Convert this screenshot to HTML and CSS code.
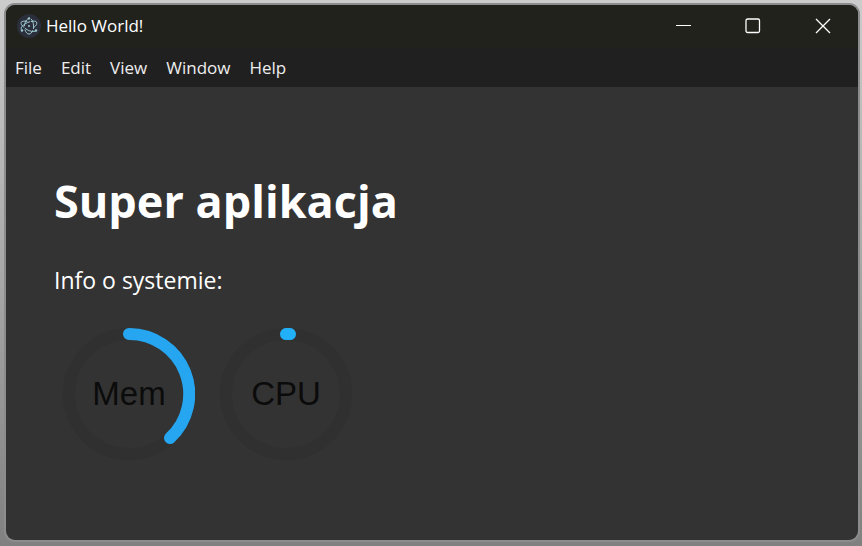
FILE: index.html
```html
<!DOCTYPE html>
<html lang="pl">
<head>
<meta charset="utf-8">
<title>Hello World!</title>
<link rel="stylesheet" href="styles.css">
</head>
<body>
<div class="window">
  <header class="titlebar">
    <svg class="logo" viewBox="0 0 24 24" aria-hidden="true">
      <circle cx="12" cy="12" r="12" fill="#2b2e3b"/>
      <g fill="none" stroke="#9fcbd3" stroke-width="1" stroke-linecap="round">
        <path d="M10 7.300C7 6.700 4.800 7.200 4.200 8.300c-.7 1.200.5 3.300 2.800 5.100"/>
        <path d="M8.300 14.600c1.200.9 2.600 1.600 4.200 2.200 3.200 1.100 5.800 1 6.500-.2"/>
        <path d="M17 13.400c2.400-1.900 3.300-4 2.600-5.300-.6-1-2.700-1.300-5.400-.7"/>
        <path d="M12.700 7.800c-1.500.4-3 1-4.600 2-2.700 1.700-4.300 3.600-4.100 5.200"/>
        <path d="M8 16c.9 2.600 2.400 4.100 4 4.100s2.900-1.500 3.800-3.600"/>
        <path d="M16.500 14.500c.5-3.500-.3-7.300-2.100-9.300"/>
        <path d="M12 4.500C9.400 5 7.800 8.200 7.500 11.800"/>
      </g>
      <g fill="#9fcbd3">
        <circle cx="12" cy="4.400" r="1.200"/>
        <circle cx="5" cy="16.500" r="1.200"/>
        <circle cx="19" cy="16.500" r="1.200"/>
        <circle cx="12" cy="12" r="1"/>
      </g>
    </svg>
    <span class="title">Hello World!</span>
    <div class="controls">
      <button class="control" type="button" aria-label="Minimize">
        <svg viewBox="0 0 16 16"><path class="line" d="M1 7.500h15"/></svg>
      </button>
      <button class="control" type="button" aria-label="Maximize">
        <svg viewBox="0 0 16 16"><rect x="1" y="1" width="13.500" height="13.500" rx="1.500"/></svg>
      </button>
      <button class="control" type="button" aria-label="Close">
        <svg viewBox="0 0 16 16"><path d="M1 1l14 14M15 1L1 15"/></svg>
      </button>
    </div>
  </header>
  <nav class="menubar">
    <button type="button">File</button>
    <button type="button">Edit</button>
    <button type="button">View</button>
    <button type="button">Window</button>
    <button type="button">Help</button>
  </nav>
  <main class="content">
    <h1>Super aplikacja</h1>
    <p>Info o systemie:</p>
    <div class="gauges">
      <svg class="gauge" viewBox="0 0 132 132" role="img" aria-label="Mem">
        <circle class="track" cx="66" cy="66" r="60"/>
        <path class="value mem" d="M66 6A60 60 0 0 1 107 110"/>
        <text x="66" y="77">Mem</text>
      </svg>
      <svg class="gauge" viewBox="0 0 132 132" role="img" aria-label="CPU">
        <circle class="track" cx="66" cy="66" r="60"/>
        <path class="value cpu" d="M66 6A60 60 0 0 1 70 6"/>
        <text x="66" y="77">CPU</text>
      </svg>
    </div>
  </main>
</div>
</body>
</html>
```
FILE: styles.css
```css
* {
  box-sizing: border-box;
}

body {
  margin: 0;
  min-height: 100vh;
  padding: 5px 4px 6px 6px;
  display: flex;
  background: linear-gradient(#cccccc, #a8a8a8 50%, #808080);
  color: #fff;
  font-family: "Open Sans", "Noto Sans", sans-serif;
}

.window {
  flex: 1;
  display: flex;
  flex-direction: column;
  overflow: hidden;
  border-radius: 9px;
  background: #333;
  box-shadow: 0 0 0 2px #8c8c8c;
}

.titlebar {
  display: flex;
  align-items: center;
  height: 43px;
  padding: 0 0 2px 11px;
  background: #21221c;
}

.logo {
  width: 24px;
  height: 24px;
}

.title {
  margin-left: 5px;
  font-size: 17px;
}

.controls {
  display: flex;
  align-self: stretch;
  margin-left: auto;
}

.control {
  width: 70px;
  padding: 0;
  border: 0;
  background: none;
  display: flex;
  align-items: center;
  justify-content: center;
}

.control svg {
  width: 16px;
  height: 16px;
  fill: none;
  stroke: #fff;
  stroke-width: 1.3;
}

.control .line {
  stroke-width: 1;
}

.menubar {
  display: flex;
  align-items: center;
  gap: 19px;
  height: 39px;
  padding: 0 9px;
  background: #202020;
}

.menubar button {
  padding: 0;
  border: 0;
  background: none;
  color: #eee;
  font: inherit;
  font-size: 17px;
}

.content {
  flex: 1;
  padding: 82px 48px 48px;
}

h1 {
  margin: 0;
  font-size: 45px;
  line-height: 64px;
}

p {
  margin: 31px 0 0;
  font-size: 23px;
  line-height: 32px;
}

.gauges {
  display: flex;
  gap: 25px;
  margin: 32px 0 0 9px;
}

.gauge {
  width: 132px;
  height: 132px;
}

.gauge text {
  fill: #0b0b0b;
  font-family: "Liberation Sans", Arial, sans-serif;
  font-size: 33px;
  text-anchor: middle;
}

.track,
.value {
  fill: none;
  stroke-width: 12;
  stroke-linecap: round;
}

.track {
  stroke: #303030;
}

.mem {
  stroke: #26a6f0;
}

.cpu {
  stroke: #22b0f8;
}
```
